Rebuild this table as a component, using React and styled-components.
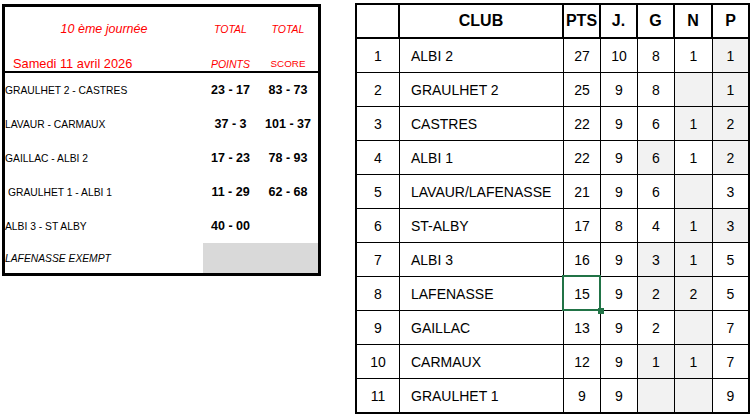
import React from 'react';
import styled, {createGlobalStyle} from 'styled-components';

const GlobalStyle = createGlobalStyle`
    body {
        margin: 0;
        background: #fff;
        font-family: "Liberation Sans", Arial, sans-serif;
        color: #000;
    }
`;

const matches = [
    {name: 'GRAULHET 2 - CASTRES', points: '23 - 17', score: '83 - 73'},
    {name: 'LAVAUR - CARMAUX', points: '37 - 3', score: '101 - 37'},
    {name: 'GAILLAC - ALBI 2', points: '17 - 23', score: '78 - 93'},
    {name: 'GRAULHET 1 - ALBI 1', points: '11 - 29', score: '62 - 68', indent: true},
    {name: 'ALBI 3 - ST ALBY', points: '40 - 00', score: ''},
];

const standings = [
    {pos: 1, club: 'ALBI 2', pts: 27, j: 10, g: 8, n: 1, p: 1, shade: ['p']},
    {pos: 2, club: 'GRAULHET 2', pts: 25, j: 9, g: 8, n: '', p: 1, shade: ['n', 'p']},
    {pos: 3, club: 'CASTRES', pts: 22, j: 9, g: 6, n: 1, p: 2, shade: ['n', 'p']},
    {pos: 4, club: 'ALBI 1', pts: 22, j: 9, g: 6, n: 1, p: 2, shade: ['g', 'p']},
    {pos: 5, club: 'LAVAUR/LAFENASSE', pts: 21, j: 9, g: 6, n: '', p: 3, shade: ['n']},
    {pos: 6, club: 'ST-ALBY', pts: 17, j: 8, g: 4, n: 1, p: 3, shade: ['n', 'p']},
    {pos: 7, club: 'ALBI 3', pts: 16, j: 9, g: 3, n: 1, p: 5, shade: ['g', 'n']},
    {pos: 8, club: 'LAFENASSE', pts: 15, j: 9, g: 2, n: 2, p: 5, shade: ['g', 'n'], selected: true},
    {pos: 9, club: 'GAILLAC', pts: 13, j: 9, g: 2, n: '', p: 7, shade: ['n']},
    {pos: 10, club: 'CARMAUX', pts: 12, j: 9, g: 1, n: 1, p: 7, shade: ['g', 'n']},
    {pos: 11, club: 'GRAULHET 1', pts: 9, j: 9, g: '', n: '', p: 9, shade: ['g', 'n']},
];

const COLS = '43px 164px 37px 37px 37px 38px 35px';
const LEFT_COLS = '198px 55px 60px';

export default function App() {
    return (
        <Page>
            <GlobalStyle/>
            <Results>
                <ResultsHeader>
                    <Title>10 ème journée</Title>
                    <HeadLabel $italic>TOTAL</HeadLabel>
                    <HeadLabel $italic>TOTAL</HeadLabel>
                    <DateLabel>Samedi 11 avril 2026</DateLabel>
                    <HeadLabel $italic $bottom>POINTS</HeadLabel>
                    <HeadLabel $bottom $small>SCORE</HeadLabel>
                </ResultsHeader>
                {matches.map(m => (
                    <MatchRow key={m.name}>
                        <MatchName $indent={m.indent}>{m.name}</MatchName>
                        <MatchScore>{m.points}</MatchScore>
                        <MatchScore>{m.score}</MatchScore>
                    </MatchRow>
                ))}
                <MatchRow $last>
                    <MatchName $italic>LAFENASSE EXEMPT</MatchName>
                    <Exempt/>
                </MatchRow>
            </Results>

            <Standings>
                <Row $head>
                    <Cell $head/>
                    <Cell $head>CLUB</Cell>
                    <Cell $head>PTS</Cell>
                    <Cell $head>J.</Cell>
                    <Cell $head>G</Cell>
                    <Cell $head>N</Cell>
                    <Cell $head $end>P</Cell>
                </Row>
                {standings.map((t, i) => (
                    <Row key={t.pos} $last={i === standings.length - 1}>
                        <Cell>{t.pos}</Cell>
                        <Cell $left>{t.club}</Cell>
                        <Cell $selected={t.selected}>{t.pts}</Cell>
                        <Cell>{t.j}</Cell>
                        <Cell $shade={t.shade.includes('g')}>{t.g}</Cell>
                        <Cell $shade={t.shade.includes('n')}>{t.n}</Cell>
                        <Cell $end $shade={t.shade.includes('p')}>{t.p}</Cell>
                    </Row>
                ))}
            </Standings>
        </Page>
    );
}

const Page = styled.div`
    display: flex;
    align-items: flex-start;
    gap: 34px;
    padding: 3px 0 0 2px;
`;

const Results = styled.section`
    box-sizing: border-box;
    width: 319px;
    height: 272px;
    margin-top: 1px;
    border: 3px solid #000;
    display: flex;
    flex-direction: column;
`;

const ResultsHeader = styled.div`
    display: grid;
    grid-template-columns: ${LEFT_COLS};
    grid-template-rows: 44px 20px;
    border-bottom: 2px solid #000;
    color: #ff0000;
`;

const Title = styled.div`
    font-size: 12.5px;
    font-style: italic;
    display: flex;
    align-items: center;
    justify-content: center;
`;

const DateLabel = styled.div`
    font-size: 12.8px;
    line-height: 14px;
    padding-left: 8px;
    align-self: end;
`;

const HeadLabel = styled.div`
    font-size: ${p => p.$small ? '9.8px' : '10.5px'};
    font-style: ${p => p.$italic ? 'italic' : 'normal'};
    line-height: 12px;
    text-align: center;
    align-self: ${p => p.$bottom ? 'end' : 'center'};
    padding-bottom: ${p => p.$bottom ? '1px' : '0'};
`;

const MatchRow = styled.div`
    display: grid;
    grid-template-columns: ${LEFT_COLS};
    height: ${p => p.$last ? '30px' : '34px'};
    align-items: center;
    flex: none;
`;

const MatchName = styled.div`
    font-size: 10.3px;
    font-style: ${p => p.$italic ? 'italic' : 'normal'};
    padding-left: ${p => p.$indent ? '3px' : '0'};
    white-space: nowrap;
`;

const MatchScore = styled.div`
    font-size: 12.5px;
    font-weight: bold;
    text-align: center;
    white-space: nowrap;
`;

const Exempt = styled.div`
    grid-column: 2 / 4;
    align-self: stretch;
    background: #d9d9d9;
`;

const Standings = styled.section`
    border: 2px solid #000;
    display: flex;
    flex-direction: column;
`;

const Row = styled.div`
    display: grid;
    grid-template-columns: ${COLS};
    height: ${p => p.$head ? '34px' : p.$last ? '33px' : '34px'};
    box-sizing: border-box;
    border-bottom: ${p => p.$head ? '2px solid #000' : p.$last ? 'none' : '1px solid #000'};
`;

const Cell = styled.div`
    position: relative;
    display: flex;
    align-items: center;
    justify-content: ${p => p.$left ? 'flex-start' : 'center'};
    padding-left: ${p => p.$left ? '11px' : '0'};
    box-sizing: border-box;
    border-right: ${p => p.$end ? 'none' : p.$head ? '2px solid #000' : '1px solid #000'};
    background: ${p => p.$shade ? '#f2f2f2' : '#fff'};
    font-size: ${p => p.$head ? '16px' : '14px'};
    font-weight: ${p => p.$head ? 'bold' : 'normal'};
    white-space: nowrap;

    ${p => p.$selected && `
        &::after {
            content: '';
            position: absolute;
            left: -2px;
            top: -2px;
            right: -1px;
            bottom: -1px;
            border: 2px solid #217346;
            z-index: 1;
        }
        &::before {
            content: '';
            position: absolute;
            right: -4px;
            bottom: -4px;
            width: 6px;
            height: 6px;
            background: #217346;
            z-index: 2;
        }
    `}
`;
